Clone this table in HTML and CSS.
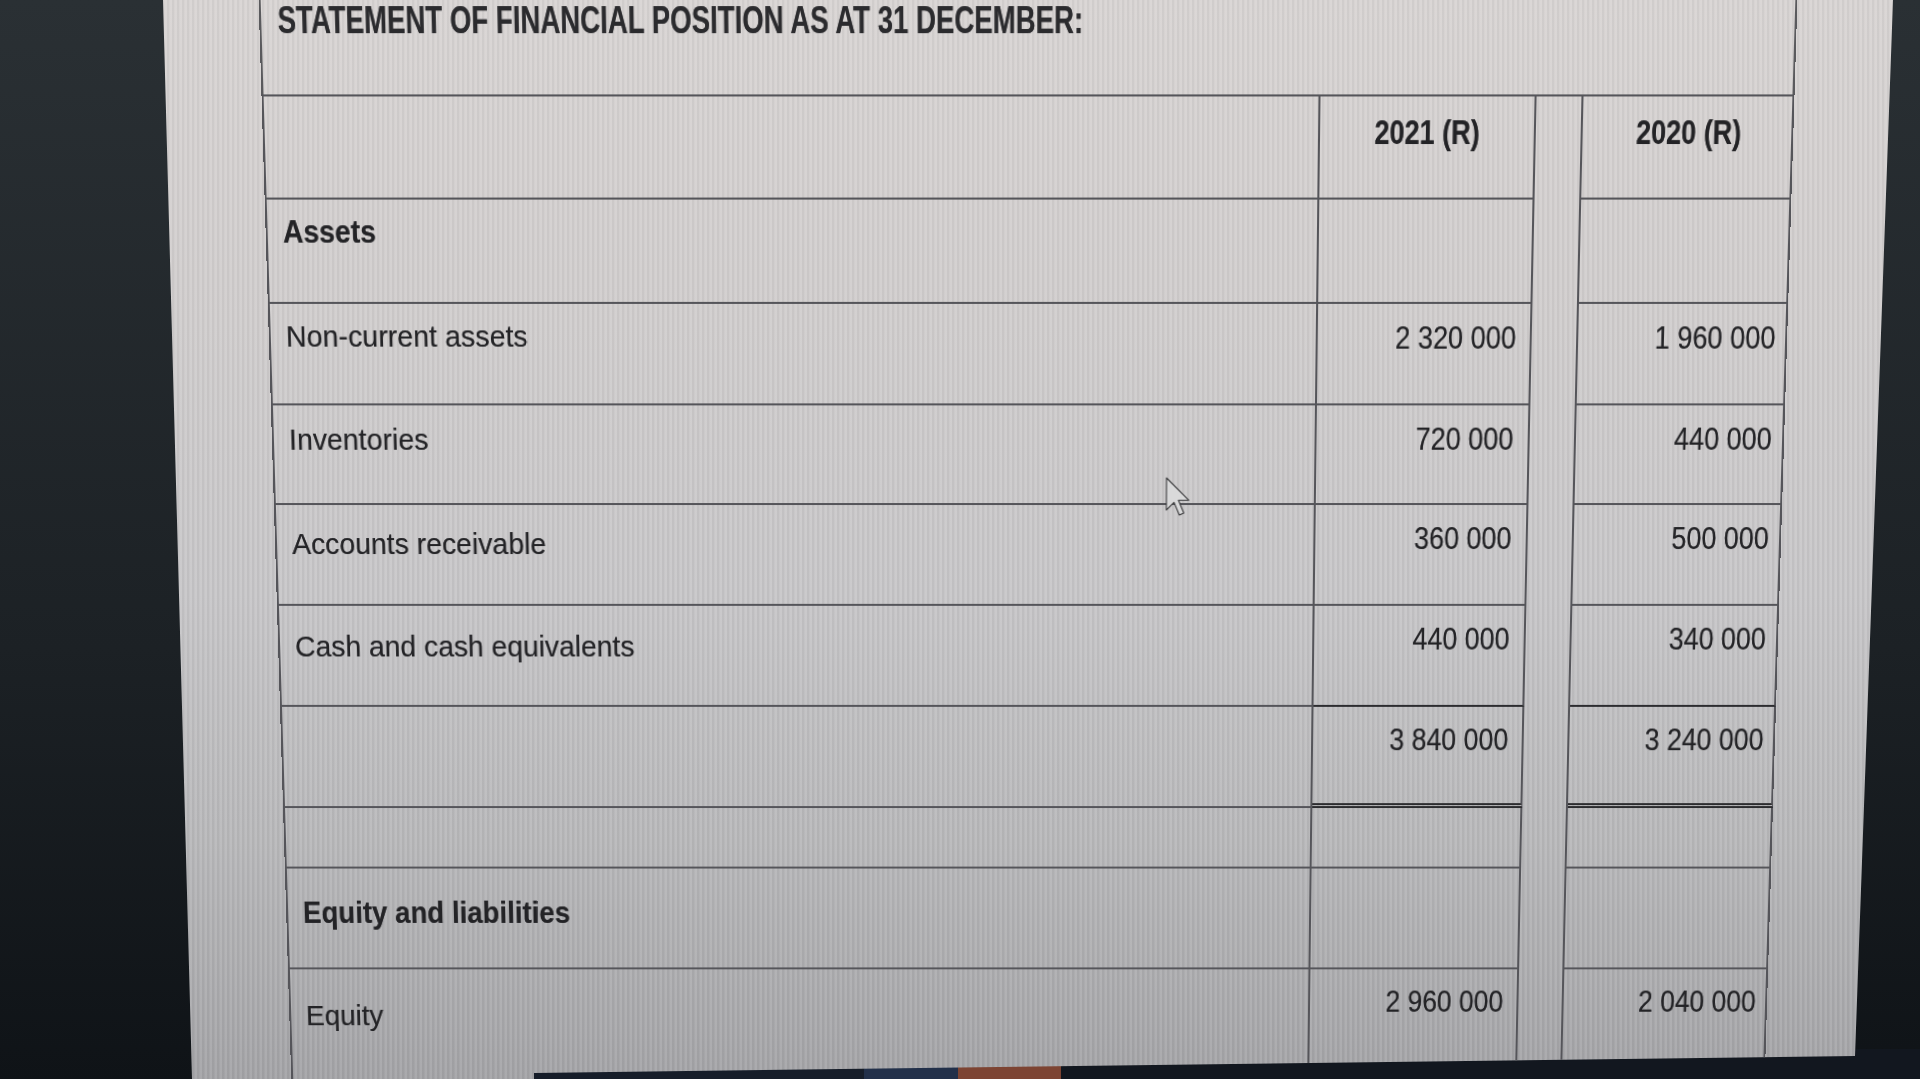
FILE: index.html
```html
<!DOCTYPE html>
<html lang="en">
<head>
<meta charset="utf-8">
<title>Statement of Financial Position</title>
<link rel="stylesheet" href="styles.css">
</head>
<body>
<div class="screen">
  <div class="doc">
    <div class="title-cell">
      <h1 class="title"><span class="t">STATEMENT OF FINANCIAL POSITION AS AT 31 DECEMBER:</span></h1>
    </div>
    <div class="table">
      <div class="row h-head">
        <div class="cell lab"></div>
        <div class="cell num head"><span class="t">2021 (R)</span></div>
        <div class="gap"></div>
        <div class="cell num head head-20"><span class="t">2020 (R)</span></div>
      </div>
      <div class="row h-102">
        <div class="cell lab bold"><span class="t">Assets</span></div>
        <div class="cell num"></div>
        <div class="gap"></div>
        <div class="cell num"></div>
      </div>
      <div class="row h-100">
        <div class="cell lab"><span class="t">Non-current assets</span></div>
        <div class="cell num c21"><span class="t">2 320 000</span></div>
        <div class="gap"></div>
        <div class="cell num c20"><span class="t">1 960 000</span></div>
      </div>
      <div class="row h-99">
        <div class="cell lab drop-1"><span class="t">Inventories</span></div>
        <div class="cell num c21"><span class="t">720 000</span></div>
        <div class="gap"></div>
        <div class="cell num c20"><span class="t">440 000</span></div>
      </div>
      <div class="row h-101">
        <div class="cell lab drop-2"><span class="t">Accounts receivable</span></div>
        <div class="cell num c21"><span class="t">360 000</span></div>
        <div class="gap"></div>
        <div class="cell num c20"><span class="t">500 000</span></div>
      </div>
      <div class="row h-102">
        <div class="cell lab drop-3"><span class="t">Cash and cash equivalents</span></div>
        <div class="cell num c21 pre-total"><span class="t">440 000</span></div>
        <div class="gap"></div>
        <div class="cell num c20 pre-total"><span class="t">340 000</span></div>
      </div>
      <div class="row h-103">
        <div class="cell lab"></div>
        <div class="cell num c21 total"><span class="t">3 840 000</span></div>
        <div class="gap"></div>
        <div class="cell num c20 total"><span class="t">3 240 000</span></div>
      </div>
      <div class="row h-blank">
        <div class="cell lab"></div>
        <div class="cell num"></div>
        <div class="gap"></div>
        <div class="cell num"></div>
      </div>
      <div class="row h-104">
        <div class="cell lab bold drop-4"><span class="t">Equity and liabilities</span></div>
        <div class="cell num"></div>
        <div class="gap"></div>
        <div class="cell num"></div>
      </div>
      <div class="row h-last">
        <div class="cell lab drop-5"><span class="t">Equity</span></div>
        <div class="cell num c21"><span class="t">2 960 000</span></div>
        <div class="gap"></div>
        <div class="cell num c20"><span class="t">2 040 000</span></div>
      </div>
    </div>
    <svg class="cursor" width="24" height="40" viewBox="0 0 12 20" aria-hidden="true">
      <path d="M0.5 0.5 L0.5 16.5 L4.3 12.7 L7 19 L9.2 18 L6.5 11.6 L11.6 11.6 Z" fill="#d9d9da" stroke="#3a3a3c" stroke-width="0.55" stroke-linejoin="round"/>
    </svg>
  </div>
</div>
</body>
</html>
```

FILE: styles.css
```css
* {
  box-sizing: border-box;
}

html,
body {
  margin: 0;
  padding: 0;
  height: 1079px;
  overflow: hidden;
}

body {
  background:
    linear-gradient(90deg, rgba(0, 0, 0, 0) 0, rgba(0, 0, 0, 0) 534px, #161d29 534px, #161d29 864px, #22304a 864px, #22304a 958px, #7d4433 958px, #7d4433 1061px, #12171f 1061px) left bottom / 100% 30px no-repeat,
    linear-gradient(180deg, #2a3034 0%, #1c2125 60%, #0f1317 100%);
  font-family: "Liberation Sans", Arial, sans-serif;
  color: #232326;
}

.screen {
  height: 1079px;
  clip-path: polygon(163px 0, 1893px 0, 1855px 1056px, 534px 1073px, 534px 1079px, 192px 1079px);
  background:
    repeating-linear-gradient(90deg, rgba(255, 255, 255, 0.07) 0 2px, rgba(0, 0, 0, 0.035) 2px 4px, rgba(255, 255, 255, 0) 4px 5px),
    linear-gradient(180deg, #d8d4d3 0%, #d0cdcd 30%, #c7c6c8 55%, #b8b8ba 78%, #a4a4a7 100%);
  overflow: hidden;
}

/* the document, seen slightly from below as in the photo */
.doc {
  position: relative;
  margin-left: 276px;
  width: 1504px;
  transform-origin: 752px 575px;
  transform: perspective(2000px) rotateX(-4.6deg);
  text-shadow: 0 0 0.6px rgba(20, 20, 24, 0.55);
}

.title-cell {
  height: 102px;
  border-left: 2px solid #5a5a5d;
  border-right: 2px solid #5a5a5d;
  padding: 14px 0 0 16px;
}

.title {
  margin: 0;
  font-size: 36px;
  line-height: 34px;
  font-weight: bold;
  color: #2b2b2e;
  white-space: nowrap;
}

.t {
  display: inline-block;
  transform-origin: left center;
}

.title .t {
  transform: scaleX(0.75);
}

.table {
  border-top: 2px solid #55555a;
  border-left: 2px solid #55555a;
}

.row {
  display: grid;
  grid-template-columns: 1037px 212px 46px 207px;
}

.h-head { height: 100px; }
.h-99 { height: 99px; }
.h-100 { height: 100px; }
.h-101 { height: 101px; }
.h-102 { height: 102px; }
.h-103 { height: 103px; }
.h-104 { height: 104px; }
.h-blank { height: 62px; }
.h-last { height: 130px; }

.cell {
  border-right: 2px solid #55555a;
  border-bottom: 2px solid #55555a;
  line-height: 40px;
  white-space: nowrap;
}

.gap {
  border-right: 2px solid #55555a;
}

.lab {
  font-size: 30px;
  padding: 12px 0 0 15px;
}

.lab .t {
  transform: scaleX(0.945);
}

.lab.bold {
  font-size: 32px;
  font-weight: bold;
  padding-top: 11px;
}

.lab.bold .t {
  transform: scaleX(0.875);
}

.drop-1 { padding-top: 14px; }
.drop-2 { padding-top: 19px; }
.drop-3 { padding-top: 21px; }
.lab.bold.drop-4 { padding-top: 25px; }
.drop-5 { padding-top: 28px; }

.num {
  font-size: 32px;
  text-align: right;
  padding: 13px 14px 0 0;
}

.c21 {
  padding-right: 14px;
}

.c20 {
  padding-right: 10px;
}

.num .t {
  transform-origin: right center;
  transform: scaleX(0.84);
}

.head {
  font-size: 33px;
  font-weight: bold;
  text-align: center;
  padding: 15px 0 0 0;
}

.head-20 {
  padding-left: 4px;
}

.head .t {
  transform-origin: center center;
  transform: scaleX(0.805);
}

.pre-total {
  border-bottom-color: #2c2c2f;
}

.total {
  border-bottom: 5px double #2c2c2f;
}

.cursor {
  position: absolute;
  left: 889px;
  top: 477px;
}
```
